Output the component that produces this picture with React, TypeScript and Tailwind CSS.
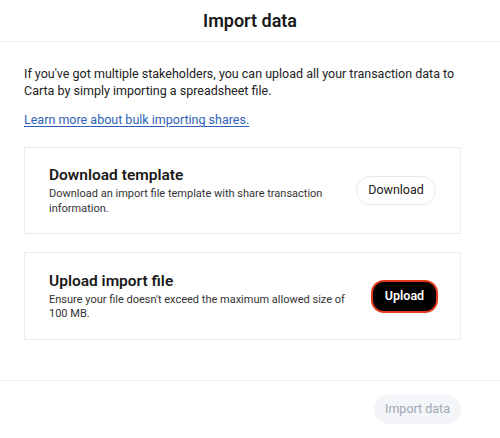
export default function App() {
  return (
    <div className="flex h-[438px] w-[500px] flex-col bg-white font-['Roboto',sans-serif] text-[#1a1a1a]">
      <div className="flex h-[42px] items-center justify-center border-b border-[#f0f0f0]">
        <h1 className="text-[18px] font-semibold">Import data</h1>
      </div>

      <div className="flex flex-1 flex-col pl-6 pr-[39px] pt-[23px]">
        <p className="text-[12.5px] leading-[17px] text-[#222]">
          If you've got multiple stakeholders, you can upload all your transaction data to Carta by simply importing a
          spreadsheet file.
        </p>
        <a href="#" className="mt-[12px] w-fit text-[12.5px] leading-[17px] text-[#2f5fb8] underline underline-offset-2">
          Learn more about bulk importing shares.
        </a>

        <div className="mt-[19px] flex h-[87px] items-center justify-between border border-[#ececec] px-6">
          <div className="w-[300px]">
            <h2 className="text-[15.5px] font-semibold leading-5">Download template</h2>
            <p className="mt-[2px] text-[11px] leading-[14.5px] text-[#333]">
              Download an import file template with share transaction information.
            </p>
          </div>
          <button className="h-[29px] w-[80px] rounded-full border border-[#e8eaee] bg-white text-[12.5px] text-[#222]">
            Download
          </button>
        </div>

        <div className="mt-[18px] flex h-[88px] items-center justify-between border border-[#ececec] px-6">
          <div className="w-[300px]">
            <h2 className="text-[15.5px] font-semibold leading-5">Upload import file</h2>
            <p className="mt-[2px] text-[11px] leading-[14.5px] text-[#333]">
              Ensure your file doesn't exceed the maximum allowed size of 100 MB.
            </p>
          </div>
          <button className="h-[29px] w-[63px] rounded-[11px] bg-black text-[12.5px] font-semibold text-white ring-2 ring-[#e5391c]">
            Upload
          </button>
        </div>
      </div>

      <div className="flex h-[58px] items-center justify-end border-t border-[#f0f0f0] px-[39px]">
        <button className="h-[29px] w-[87px] rounded-full bg-[#f3f5f9] text-[12.5px] text-[#a0a7b4]">Import data</button>
      </div>
    </div>
  );
}
